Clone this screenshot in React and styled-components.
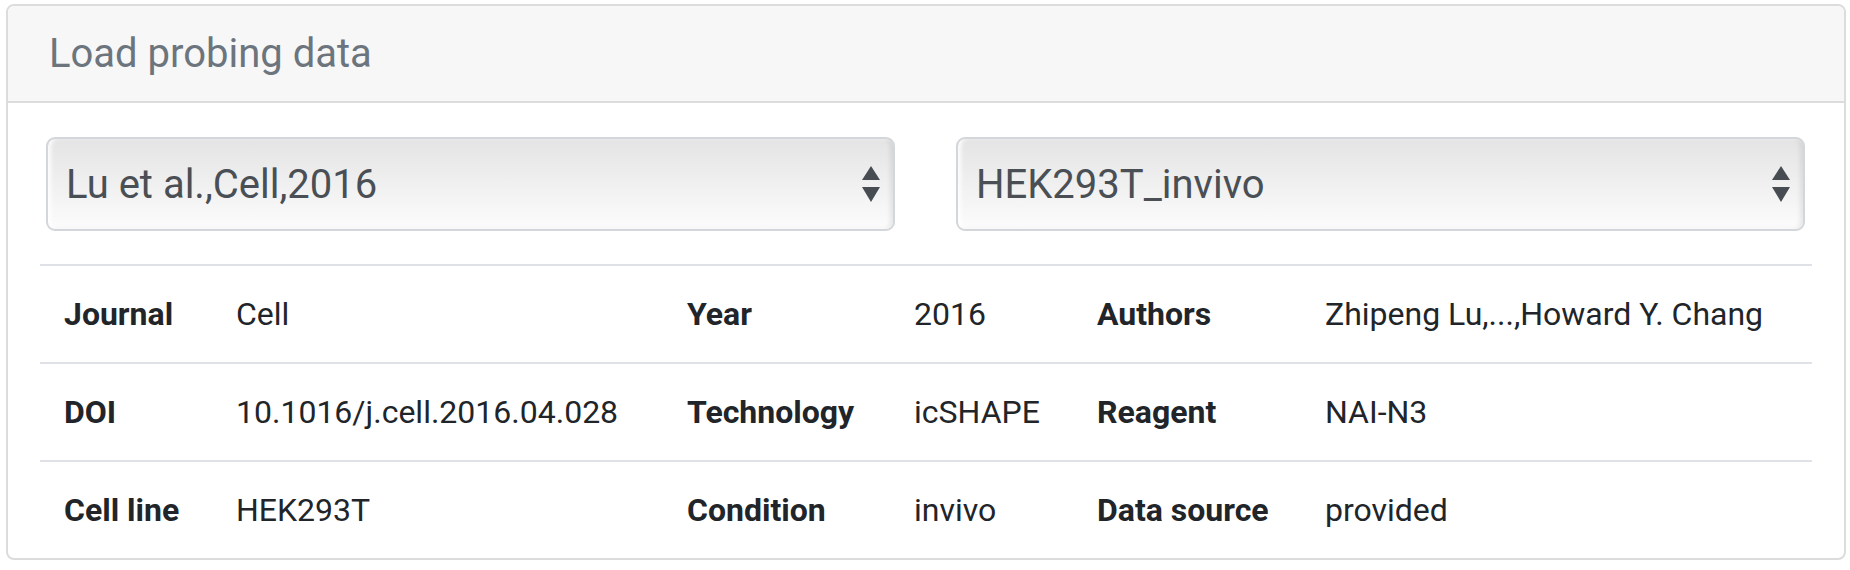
import React from 'react';
import styled, { createGlobalStyle } from 'styled-components';

const GlobalStyle = createGlobalStyle`
  body {
    margin: 0;
    background: #ffffff;
    font-family: Roboto, 'Liberation Sans', sans-serif;
    color: #212529;
  }
`;

const Page = styled.div`
  padding: 4px 4px 0 6px;
`;

const Card = styled.div`
  border: 2px solid #dcdcdc;
  border-radius: 8px;
  overflow: hidden;
  background: #fff;
`;

const CardHeader = styled.div`
  display: flex;
  align-items: center;
  height: 95px;
  padding: 0 41px;
  background: #f7f7f7;
  border-bottom: 2px solid #dcdcdc;
`;

const Title = styled.h5`
  margin: 0;
  font-size: 40px;
  font-weight: 400;
  line-height: 48px;
  color: #6c757d;
`;

const SelectRow = styled.div`
  display: grid;
  grid-template-columns: 1fr 1fr;
  gap: 61px;
  padding: 34px 39px 33px 38px;
`;

const SelectBox = styled.div`
  display: flex;
  align-items: center;
  justify-content: space-between;
  height: 94px;
  box-sizing: border-box;
  padding: 0 12px 0 18px;
  border: 2px solid #d3d6da;
  border-radius: 9px;
  background: linear-gradient(#e4e4e4 0%, #f1f1f1 55%, #fcfcfc 100%);
  box-shadow: inset 3px 0 4px rgba(255, 255, 255, 0.9), inset -3px 0 4px rgba(0, 0, 0, 0.08);
  font-size: 40px;
  color: #4a4f55;
`;

const Arrows = ({ className }) => (
  <svg className={className} width="20" height="38" viewBox="0 0 20 38">
    <polygon points="10,1 19,15 1,15" fill="#474c52" />
    <polygon points="1,22 19,22 10,37" fill="#474c52" />
  </svg>
);

const TableWrap = styled.div`
  padding: 0 32px;
`;

const InfoTable = styled.table`
  width: 100%;
  table-layout: fixed;
  border-collapse: collapse;
  font-size: 32px;
`;

const Cell = styled.td`
  height: 96px;
  padding: 0 0 0 24px;
  border-top: 2px solid #dee2e6;
  vertical-align: middle;
  white-space: nowrap;
  font-weight: ${(p) => (p.$label ? 700 : 400)};
  color: #212529;
`;

const rows = [
  ['Journal', 'Cell', 'Year', '2016', 'Authors', 'Zhipeng Lu,...,Howard Y. Chang'],
  ['DOI', '10.1016/j.cell.2016.04.028', 'Technology', 'icSHAPE', 'Reagent', 'NAI-N3'],
  ['Cell line', 'HEK293T', 'Condition', 'invivo', 'Data source', 'provided'],
];

const widths = [172, 451, 227, 183, 228, 511];

export default function App() {
  return (
    <>
      <GlobalStyle />
      <Page>
        <Card>
          <CardHeader>
            <Title>Load probing data</Title>
          </CardHeader>
          <SelectRow>
            <SelectBox>
              <span>Lu et al.,Cell,2016</span>
              <Arrows />
            </SelectBox>
            <SelectBox>
              <span>HEK293T_invivo</span>
              <Arrows />
            </SelectBox>
          </SelectRow>
          <TableWrap>
            <InfoTable>
              <colgroup>
                {widths.map((w, i) => (
                  <col key={i} style={{ width: w }} />
                ))}
              </colgroup>
              <tbody>
                {rows.map((r, i) => (
                  <tr key={i}>
                    {r.map((text, j) => (
                      <Cell key={j} $label={j % 2 === 0}>
                        {text}
                      </Cell>
                    ))}
                  </tr>
                ))}
              </tbody>
            </InfoTable>
          </TableWrap>
        </Card>
      </Page>
    </>
  );
}
